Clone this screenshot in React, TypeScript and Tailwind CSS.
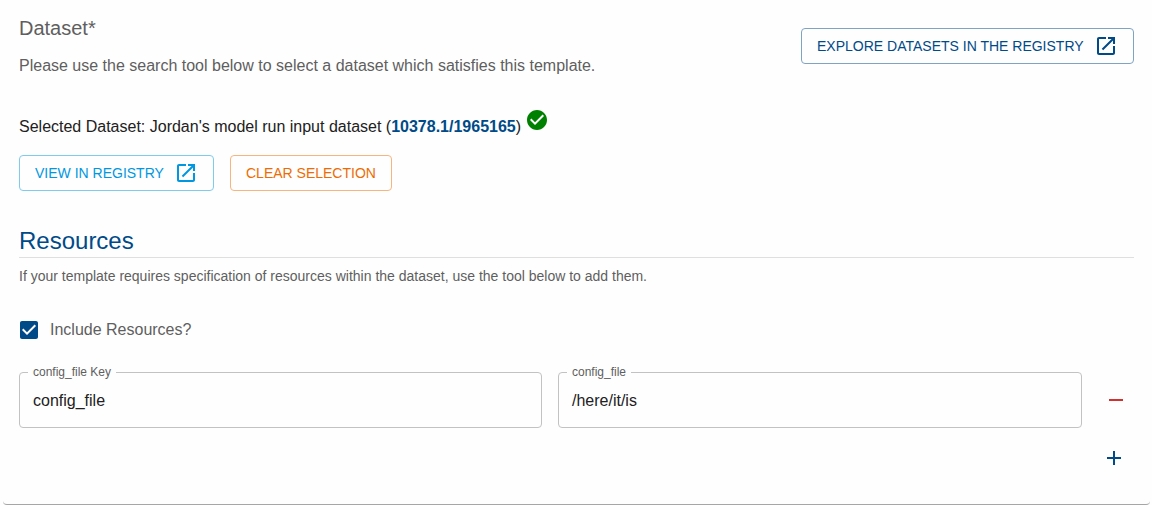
import React from "react";

function Icon({ d, className = "" }: { d: string; className?: string }) {
  return (
    <svg viewBox="0 0 24 24" fill="currentColor" className={`size-6 shrink-0 ${className}`} aria-hidden="true">
      <path d={d} />
    </svg>
  );
}

const launch =
  "M19 19H5V5h7V3H5c-1.11 0-2 .9-2 2v14c0 1.1.89 2 2 2h14c1.1 0 2-.9 2-2v-7h-2v7zM14 3v2h3.59l-9.83 9.83 1.41 1.41L19 6.41V10h2V3h-7z";
const checkCircle =
  "M12 2C6.48 2 2 6.48 2 12s4.48 10 10 10 10-4.48 10-10S17.52 2 12 2zm-2 15l-5-5 1.41-1.41L10 14.17l7.59-7.59L19 8l-9 9z";
const checkBox =
  "M19 3H5c-1.11 0-2 .9-2 2v14c0 1.1.89 2 2 2h14c1.11 0 2-.9 2-2V5c0-1.1-.89-2-2-2zm-9 14l-5-5 1.41-1.41L10 14.17l7.59-7.59L19 8l-9 9z";

const buttonBase = "flex h-9 items-center justify-between rounded border px-[15px] text-sm whitespace-nowrap";

function Field({ label, value, className }: { label: string; value: string; className: string }) {
  return (
    <div className={`relative flex h-14 items-center rounded border border-[#c2c2c2] px-[13px] pt-0.5 text-base text-[#212121] ${className}`}>
      <span className="absolute -top-[9px] left-2 bg-[#fefefe] px-[5px] text-xs leading-4 text-[#5f5f5f]">{label}</span>
      {value}
    </div>
  );
}

export default function App() {
  return (
    <div className="h-[505px] overflow-hidden bg-[#fefefe] pr-0.5 pl-[3px] font-['Liberation_Sans',Arial,sans-serif]">
      <main className="h-[505px] rounded-b border-b border-[#a6a6a6] px-4">
        <header className="flex justify-between">
          <div className="pt-3">
            <h1 className="text-xl leading-8 text-[#5f5f5f]">Dataset*</h1>
            <p className="mt-2.5 text-base leading-6 text-[#5f5f5f]">
              Please use the search tool below to select a dataset which satisfies this template.
            </p>
          </div>
          <button className={`${buttonBase} mt-7 w-[333px] border-[#7fa4c3] text-[#004a88]`}>
            EXPLORE DATASETS IN THE REGISTRY
            <Icon d={launch} />
          </button>
        </header>

        <div className="mt-[30px] flex h-[39px] text-base leading-6 text-[#212121]">
          <p className="pt-[7px]">
            Selected Dataset: Jordan's model run input dataset (
            <b className="text-[#004a88]">10378.1/1965165</b>)
          </p>
          <Icon d={checkCircle} className="ml-1 text-[#008000]" />
        </div>

        <div className="mt-2 flex gap-4">
          <button className={`${buttonBase} w-[195px] border-[#7fcbf0] text-[#0097e2]`}>
            VIEW IN REGISTRY
            <Icon d={launch} />
          </button>
          <button className={`${buttonBase} w-[162px] border-[#f6b57f] text-[#ed6c02]`}>CLEAR SELECTION</button>
        </div>

        <h2 className="mt-[34px] h-[33px] border-b border-[#dfdfdf] text-2xl leading-8 text-[#004a88]">Resources</h2>
        <p className="mt-2 text-sm leading-5 text-[#5f5f5f]">
          If your template requires specification of resources within the dataset, use the tool below to add them.
        </p>

        <label className="mt-8 -ml-0.5 flex h-6 items-center gap-[9px] text-base text-[#5f5f5f]">
          <Icon d={checkBox} className="text-[#004a88]" />
          Include Resources?
        </label>

        <div className="mt-[30px] flex items-center">
          <Field label="config_file Key" value="config_file" className="w-[523px]" />
          <Field label="config_file" value="/here/it/is" className="ml-4 w-[524px]" />
          <button aria-label="Remove" className="ml-[22px] text-[#d32f2f]">
            <Icon d="M19 13H5v-2h14v2z" />
          </button>
        </div>
        <div className="mt-[18px] flex justify-end pr-2">
          <button aria-label="Add" className="text-[#004a88]">
            <Icon d="M19 13h-6v6h-2v-6H5v-2h6V5h2v6h6v2z" />
          </button>
        </div>
      </main>
    </div>
  );
}
